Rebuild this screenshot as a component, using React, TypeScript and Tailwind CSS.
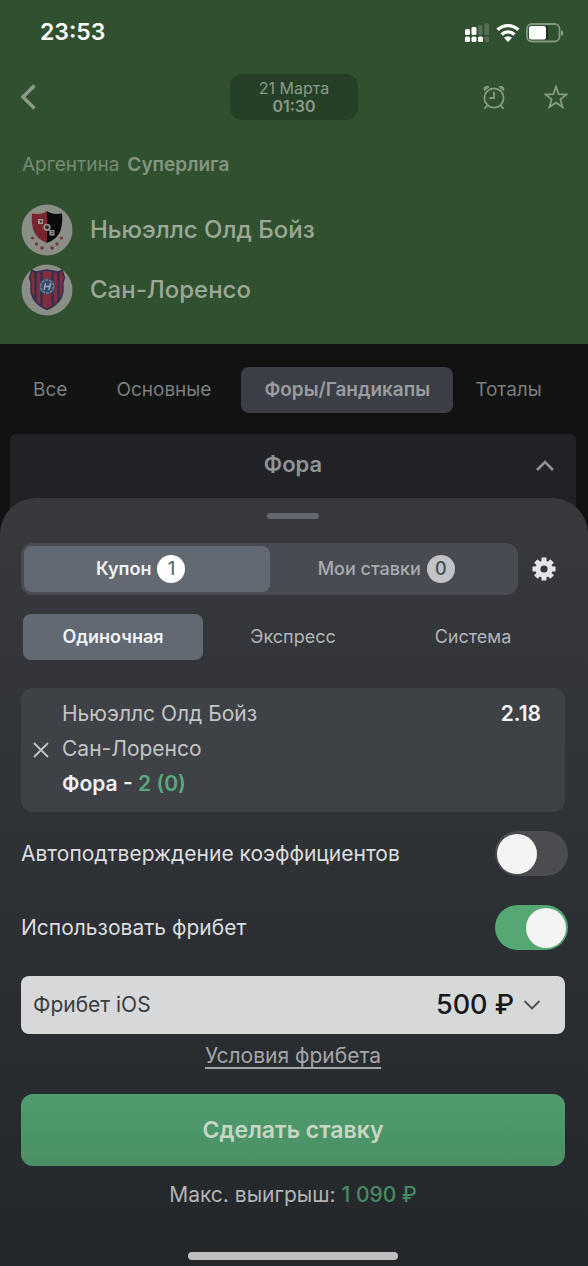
import { useState } from "react";

const markets = ["Все", "Основные", "Форы/Гандикапы", "Тоталы"];
const betTypes = ["Одиночная", "Экспресс", "Система"];

function SignalIcon() {
    return (
        <svg width="25" height="20" viewBox="0 0 25 20" fill="#fff" aria-hidden="true">
            <rect x="0" y="6" width="5" height="6" rx="1.5" />
            <rect x="6.5" y="4" width="5" height="8" rx="1.5" />
            <rect x="13" y="2" width="4.5" height="10" rx="1.5" opacity=".18" />
            <rect x="19.5" y="0" width="4.5" height="12" rx="1.5" opacity=".18" />
            <rect x="0" y="13.5" width="5" height="5.5" rx="1.5" />
            <rect x="6.5" y="13.5" width="5" height="5.5" rx="1.5" />
            <rect x="13" y="13.5" width="5" height="5.5" rx="1.5" />
            <rect x="19.5" y="13.5" width="4.5" height="5.5" rx="1.5" opacity=".18" />
        </svg>
    );
}

function WifiIcon() {
    return (
        <svg width="24" height="20" viewBox="0 0 24 20" fill="none" stroke="#fff" strokeWidth="3.4" aria-hidden="true">
            <path d="M1.6 6.8a15 15 0 0 1 20.8 0" />
            <path d="M5.6 11.4a9.3 9.3 0 0 1 12.8 0" />
            <path d="M12 19 8 14.8a5.8 5.8 0 0 1 8 0Z" fill="#fff" stroke="none" />
        </svg>
    );
}

function BatteryIcon() {
    return (
        <svg width="38" height="20" viewBox="0 0 38 20" aria-hidden="true">
            <rect x="1" y="1" width="32.5" height="17.5" rx="5" fill="none" stroke="#84977f" strokeWidth="1.8" />
            <rect x="3" y="3" width="17" height="13.5" rx="2.5" fill="#fff" />
            <path d="M20 3h2v13.5h-2Z" fill="#1c2f1c" />
            <path d="M35 7v6q2.5-.6 2.5-3T35 7Z" fill="#84977f" />
        </svg>
    );
}

function AlarmIcon() {
    return (
        <svg width="24" height="26" viewBox="0 0 24 26" fill="none" stroke="currentColor" strokeWidth="1.8" strokeLinecap="round" aria-hidden="true">
            <circle cx="12" cy="14" r="9.6" />
            <path d="M12 8.5V14H8" />
            <path d="M2.2 6.2a3 3 0 0 1 4.6-3.4Z" fill="currentColor" strokeWidth="1" />
            <path d="M21.8 6.2a3 3 0 0 0-4.6-3.4Z" fill="currentColor" strokeWidth="1" />
            <path d="m5 22-2 2.2M19 22l2 2.2" />
        </svg>
    );
}

function NewellsCrest() {
    return (
        <svg className="size-[52px] shrink-0" viewBox="0 0 52 52" aria-hidden="true">
            <circle cx="26" cy="26" r="25.5" fill="#8b8d87" />
            <path d="M26 7q-5 4-15 2.5-1 9 1.5 17T26 39Z" fill="#79252d" />
            <path d="M26 7q5 4 15 2.5 1 9-1.5 17T26 39Z" fill="#0a0a0a" />
            <path d="M17 15h5v5h-5ZM28.5 26h5v5.5h-5Z" fill="#9b9996" />
            <path d="M18.5 16.5h1v2h1v-2M30 27.5h2v2h-2" fill="none" stroke="#4f2024" strokeWidth=".8" />
            <circle cx="26" cy="23.3" r="2.8" fill="#3c2327" stroke="#9b9996" strokeWidth="1.6" />
            <g fill="#79353b">
                <circle cx="11.5" cy="34" r="1.6" />
                <circle cx="15.5" cy="40" r="1.7" />
                <circle cx="21" cy="44" r="1.8" />
                <circle cx="31" cy="44" r="1.8" />
                <circle cx="36" cy="40" r="1.7" />
                <circle cx="40.5" cy="34" r="1.6" />
            </g>
        </svg>
    );
}

function SanLorenzoCrest() {
    return (
        <svg className="size-[52px] shrink-0" viewBox="0 0 52 52" aria-hidden="true">
            <defs>
                <clipPath id="shield">
                    <path d="M11 6q3 3 7 1.5L26 6l8 1.5Q38 9 41 6l2.5 8q-2 3-1.5 9 1 15-16 22.5Q9 38 10 23q.5-6-1.5-9Z" />
                </clipPath>
            </defs>
            <circle cx="26" cy="26" r="25.5" fill="#8b8d87" />
            <g clipPath="url(#shield)">
                <path d="M8 4h36v44H8Z" fill="#822c3c" />
                <path d="M14.5 4v44M20.5 4v44M31.5 4v44M37.5 4v44" stroke="#2d3152" strokeWidth="2.4" />
            </g>
            <path d="M11 6q3 3 7 1.5L26 6l8 1.5Q38 9 41 6l2.5 8q-2 3-1.5 9 1 15-16 22.5Q9 38 10 23q.5-6-1.5-9Z" fill="none" stroke="#33304f" strokeWidth="1.5" />
            <circle cx="26" cy="22.5" r="8" fill="#35486b" />
            <circle cx="26" cy="22.5" r="6.5" fill="none" stroke="#718295" strokeWidth="1.5" strokeDasharray="3 1" />
            <path d="m23 26 1.5-7M28 26l1.5-7M24 22.5h5" stroke="#9aa5ad" strokeWidth="1.5" />
        </svg>
    );
}

function GearIcon() {
    return (
        <svg width="24" height="24" viewBox="0 0 24 24" aria-hidden="true">
            <g stroke="#e4e5e6" strokeWidth="5">
                <path d="M12 .5v23M.5 12h23M3.9 3.9l16.2 16.2M20.1 3.9 3.9 20.1" />
            </g>
            <circle cx="12" cy="12" r="8.6" fill="#e4e5e6" />
            <circle cx="12" cy="12" r="3.6" fill="#33363b" />
        </svg>
    );
}

function Toggle({ label, defaultChecked }: { label: string; defaultChecked: boolean }) {
    return (
        <label className="flex h-[45px] items-center justify-between text-[21px] text-[#dcdddf]">
            {label}
            <input type="checkbox" role="switch" defaultChecked={defaultChecked} className="peer sr-only" />
            <span className="-mr-[3px] flex h-[45px] w-[73px] items-center rounded-full bg-[#4b4c4f] px-0.5 peer-checked:justify-end peer-checked:bg-[#55a873]">
                <span className="size-10 rounded-full bg-[#f4f4f5]" />
            </span>
        </label>
    );
}

export default function App() {
    const [market, setMarket] = useState("Форы/Гандикапы");
    const [betType, setBetType] = useState("Одиночная");

    return (
        <div className="flex min-h-screen flex-col bg-[#101312] font-['Inter',sans-serif]">
            <header className="bg-[#305030] pb-7 text-[#8b9a88]">
                <div className="flex h-[65px] items-center justify-between pr-6 pl-10">
                    <span className="text-[23px] font-semibold text-white">23:53</span>
                    <div className="flex items-center gap-[6px]">
                        <SignalIcon />
                        <WifiIcon />
                        <BatteryIcon />
                    </div>
                </div>

                <nav className="grid grid-cols-3 items-center px-5 pt-[9px]">
                    <button aria-label="Назад" className="justify-self-start">
                        <svg width="17" height="28" viewBox="0 0 17 28" fill="none" stroke="currentColor" strokeWidth="3.5" aria-hidden="true">
                            <path d="M14.5 2.5 3 14l11.5 11.5" />
                        </svg>
                    </button>
                    <div className="flex h-[46px] w-32 flex-col justify-center justify-self-center rounded-xl bg-[#264028] text-center text-base leading-[18px]">
                        <span>21 Марта</span>
                        <span className="font-semibold">01:30</span>
                    </div>
                    <div className="flex items-center gap-[38px] justify-self-end">
                        <button aria-label="Напоминание"><AlarmIcon /></button>
                        <button aria-label="В избранное">
                            <svg width="24" height="24" viewBox="0 0 24 24" fill="none" stroke="currentColor" strokeWidth="1.8" aria-hidden="true">
                                <path d="m12 1.8 2.7 7.4 7.9.3-6.2 4.9 2.1 7.6L12 17.7 5.5 22l2.1-7.6-6.2-4.9 7.9-.3Z" />
                            </svg>
                        </button>
                    </div>
                </nav>

                <p className="mt-[31px] flex gap-2 px-[22px] text-[19px] leading-7 text-[#768a72]">
                    <span>Аргентина</span>
                    <span className="font-semibold text-[#84957f]">Суперлига</span>
                </p>

                <div className="mt-[25px] flex flex-col gap-2 px-[21px] text-2xl font-medium text-[#9ba898]">
                    <div className="flex items-center gap-[17px]">
                        <NewellsCrest />
                        Ньюэллс Олд Бойз
                    </div>
                    <div className="flex items-center gap-[17px]">
                        <SanLorenzoCrest />
                        Сан-Лоренсо
                    </div>
                </div>
            </header>

            <div className="flex items-center gap-[3px] px-[10px] pt-[23px] pb-[21px]">
                {markets.map((name) => (
                    <button
                        key={name}
                        onClick={() => setMarket(name)}
                        className={
                            name === market
                                ? "-mr-1 ml-1 h-[46px] rounded-lg bg-[#3b3e44] px-[23px] text-[19px] font-semibold text-[#9a9ca0]"
                                : "h-[46px] rounded-lg px-[23px] text-[19px] text-[#7b7d7f]"
                        }
                    >
                        {name}
                    </button>
                ))}
            </div>

            <button className="mr-3 ml-[10px] grid h-[104px] grid-cols-[1fr_auto_1fr] items-start rounded-t-md bg-[#212226] px-[21px] pt-4 text-[#929396]">
                <span className="col-start-2 text-[22px] leading-7 font-semibold">Фора</span>
                <svg className="mt-2 justify-self-end" width="20" height="14" viewBox="0 0 20 14" fill="none" stroke="currentColor" strokeWidth="2.5" aria-hidden="true">
                    <path d="m2 12 8-8 8 8" />
                </svg>
            </button>

            <main className="relative -mt-10 flex flex-1 flex-col rounded-t-[36px] bg-linear-to-b from-[#38393d] via-[#313439] via-30% to-[#24272a] pt-[15px] pr-[23px] pb-[6px] pl-[21px]">
                <span className="h-[6px] w-[52px] self-center rounded-full bg-[#64676f]" />

                <div className="mt-6 flex items-center gap-[14px]">
                    <div className="grid h-[52px] flex-1 grid-cols-2 rounded-xl bg-[#484b51] p-[3px] text-lg">
                        <button className="flex items-center justify-center gap-[6px] rounded-lg bg-[#626973] pr-3 font-semibold text-[#f3f4f5]">
                            Купон
                            <span className="flex size-7 items-center justify-center rounded-full bg-white font-medium text-[#626973]">1</span>
                        </button>
                        <button className="flex items-center justify-center gap-[6px] pr-3 font-medium text-[#a9abaf]">
                            Мои ставки
                            <span className="flex size-7 items-center justify-center rounded-full bg-[#c2c3c8] text-[#484b51]">0</span>
                        </button>
                    </div>
                    <button aria-label="Настройки" className="mr-[9px]"><GearIcon /></button>
                </div>

                <div className="mt-[19px] grid grid-cols-3 px-[2px]">
                    {betTypes.map((name) => (
                        <button
                            key={name}
                            onClick={() => setBetType(name)}
                            className={
                                name === betType
                                    ? "h-[46px] rounded-lg bg-[#626973] text-lg font-semibold text-[#f3f4f5]"
                                    : "h-[46px] rounded-lg text-lg text-[#b4b5b8]"
                            }
                        >
                            {name}
                        </button>
                    ))}
                </div>

                <div className="mt-7 flex h-[124px] items-center rounded-xl bg-[#3e4145] pr-6 pl-3">
                    <button aria-label="Удалить" className="mr-[13px] text-[#c3c4c6]">
                        <svg width="16" height="16" viewBox="0 0 16 16" fill="none" stroke="currentColor" strokeWidth="1.8" aria-hidden="true">
                            <path d="m1 1 14 14M15 1 1 15" />
                        </svg>
                    </button>
                    <div className="flex-1 pb-1 text-[21px] leading-[35px] text-[#c3c4c6]">
                        <p>Ньюэллс Олд Бойз</p>
                        <p>Сан-Лоренсо</p>
                        <p className="font-semibold text-[#f3f4f5]">
                            Фора - <span className="text-[#5aa87c]">2 (0)</span>
                        </p>
                    </div>
                    <span className="self-start pt-2 text-[21px] leading-[35px] font-semibold text-[#f3f4f5]">2.18</span>
                </div>

                <div className="mt-[19px] flex flex-col gap-[29px]">
                    <Toggle label="Автоподтверждение коэффициентов" defaultChecked={false} />
                    <Toggle label="Использовать фрибет" defaultChecked={true} />
                </div>

                <div className="mt-[26px] flex h-[58px] items-center justify-between rounded-lg bg-[#d6d8da] pr-6 pl-3 text-[#17181a]">
                    <label htmlFor="freebet" className="text-[21px] text-[#3a3b3d]">Фрибет iOS</label>
                    <div className="flex items-center gap-2">
                        <select id="freebet" className="appearance-none bg-transparent text-[27px] font-medium">
                            <option>500 ₽</option>
                        </select>
                        <svg width="18" height="12" viewBox="0 0 18 12" fill="none" stroke="#4b4c4f" strokeWidth="1.8" aria-hidden="true">
                            <path d="m1.5 2 7.5 7.5L16.5 2" />
                        </svg>
                    </div>
                </div>

                <a href="#terms" className="mt-2 self-center text-[21px] leading-7 text-[#a3a5a8] underline underline-offset-4">
                    Условия фрибета
                </a>

                <button className="mt-6 h-[72px] rounded-xl bg-linear-to-b from-[#509c6e] to-[#4a9064] text-[23px] font-semibold text-[#c8d6c6]">
                    Сделать ставку
                </button>

                <p className="mt-[15px] text-center text-[21px] leading-7 text-[#b2b4b6]">
                    Макс. выигрыш: <span className="font-medium text-[#468a63]">1 090 ₽</span>
                </p>

                <span className="mt-auto h-2 w-[210px] self-center rounded-full bg-[#bebfc0]" />
            </main>
        </div>
    );
}
